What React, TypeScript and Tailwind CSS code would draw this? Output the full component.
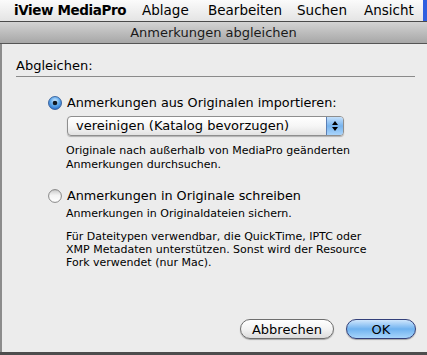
import React from "react";

const font = { fontFamily: '"DejaVu Sans", "Lucida Grande", Verdana, sans-serif' };

function Radio({ checked }: { checked: boolean }) {
  if (checked) {
    return (
      <svg width="14" height="14" viewBox="0 0 14 14" className="shrink-0">
        <defs>
          <radialGradient id="rb" cx="50%" cy="35%" r="70%">
            <stop offset="0%" stopColor="#d6ecff" />
            <stop offset="50%" stopColor="#5fa8ea" />
            <stop offset="100%" stopColor="#1f64c4" />
          </radialGradient>
        </defs>
        <circle cx="7" cy="7" r="6.5" fill="url(#rb)" stroke="#27508f" strokeWidth="0.8" />
        <circle cx="7" cy="7" r="2.3" fill="#101820" />
      </svg>
    );
  }
  return (
    <svg width="14" height="14" viewBox="0 0 14 14" className="shrink-0">
      <defs>
        <linearGradient id="rw" x1="0" y1="0" x2="0" y2="1">
          <stop offset="0%" stopColor="#c8c8c8" />
          <stop offset="45%" stopColor="#f4f4f4" />
          <stop offset="100%" stopColor="#ffffff" />
        </linearGradient>
      </defs>
      <circle cx="7" cy="7" r="6.4" fill="url(#rw)" stroke="#7a7a7a" strokeWidth="0.9" />
    </svg>
  );
}

export default function App() {
  return (
    <div className="relative w-[427px] h-[355px] overflow-hidden bg-[#ececec] text-black" style={font}>
      {/* MENU BAR */}
      <div className="flex h-[22px] items-center whitespace-nowrap bg-gradient-to-b from-[#fbfbfb] to-[#e4e4e4] border-b border-[#4a4a4a] text-[13.5px]">
        <span className="ml-[14px] w-[128px] shrink-0 font-bold tracking-[-0.4px]">iView MediaPro</span>
        <span className="w-[66px] shrink-0">Ablage</span>
        <span className="w-[89px] shrink-0">Bearbeiten</span>
        <span className="w-[67px] shrink-0">Suchen</span>
        <span className="shrink-0">Ansicht</span>
        <div className="ml-auto w-[4px] h-full shrink-0 bg-[#2f5fe0]"></div>
      </div>

      {/* DIALOG TITLE */}
      <div className="flex h-[22px] items-center justify-center bg-gradient-to-b from-[#d3d3d3] to-[#a7a7a7] border-b border-[#555] text-[13px] text-[#1a1a1a]">
        Anmerkungen abgleichen
      </div>

      <div className="flex h-[308px]">
        <div className="w-[2px] bg-[#8c8c8c]"></div>
        <div className="flex-1 flex flex-col">
          {/* HEADER */}
          <div className="ml-[14px] mr-[12px] mt-[14px] border-b border-[#8a8a8a] pb-[2px] text-[13px] leading-[16px]">
            Abgleichen:
          </div>

          {/* OPTION 1 */}
          <div className="ml-[46px] mt-[18px] flex items-center gap-[5px] text-[12.8px] leading-[16px]">
            <Radio checked />
            <span>Anmerkungen aus Originalen importieren:</span>
          </div>
          <div className="ml-[65px] mt-[5px] flex h-[20px] w-[277px] items-center rounded-[4px] border border-[#8e8e8e] bg-gradient-to-b from-white via-[#f6f6f6] to-[#e2e2e2] shadow-[0_1px_1px_rgba(0,0,0,0.25)]">
            <span className="flex-1 pl-[8px] text-[13px]">vereinigen (Katalog bevorzugen)</span>
            <div className="flex h-full w-[17px] flex-col items-center justify-center gap-[2px] rounded-r-[3px] border-l border-[#5b7fb5] bg-gradient-to-b from-[#c4e0fb] via-[#78b4ee] to-[#a9d4fb]">
              <div className="h-0 w-0 border-x-[3px] border-b-[4px] border-x-transparent border-b-black"></div>
              <div className="h-0 w-0 border-x-[3px] border-t-[4px] border-x-transparent border-t-black"></div>
            </div>
          </div>
          <div className="ml-[64px] mt-[8px] text-[11px] leading-[14px]">
            <p>Originale nach außerhalb von MediaPro geänderten</p>
            <p>Anmerkungen durchsuchen.</p>
          </div>

          {/* OPTION 2 */}
          <div className="ml-[46px] mt-[16px] flex items-center gap-[5px] text-[12.8px] leading-[16px]">
            <Radio checked={false} />
            <span>Anmerkungen in Originale schreiben</span>
          </div>
          <p className="ml-[64px] mt-[3px] text-[11px] leading-[14px]">Anmerkungen in Originaldateien sichern.</p>
          <div className="ml-[64px] mt-[9px] text-[11px] leading-[13px]">
            <p>Für Dateitypen verwendbar, die QuickTime, IPTC oder</p>
            <p>XMP Metadaten unterstützen. Sonst wird der Resource</p>
            <p>Fork verwendet (nur Mac).</p>
          </div>

          {/* BUTTONS */}
          <div className="mt-auto mb-[13px] mr-[11px] flex justify-end gap-[12px] text-[13px]">
            <button className="h-[20px] w-[94px] rounded-full border border-[#6e6e6e] bg-gradient-to-b from-white via-[#f3f3f3] to-[#dcdcdc] shadow-[0_1px_1px_rgba(0,0,0,0.3)]">
              Abbrechen
            </button>
            <button className="h-[20px] w-[70px] rounded-full border border-[#33407a] bg-gradient-to-b from-[#cfe6fc] via-[#6fb2ef] to-[#a7d5fb] shadow-[0_1px_1px_rgba(0,0,0,0.3)]">
              OK
            </button>
          </div>
        </div>
      </div>
      <div className="h-[3px] bg-[#4d4d4d]"></div>
    </div>
  );
}
